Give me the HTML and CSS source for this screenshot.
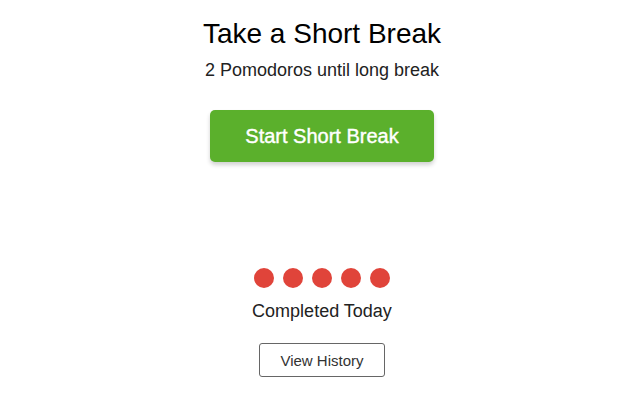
FILE: index.html
```html
<!DOCTYPE html>
<html>
<head>
<meta charset="utf-8">
<link rel="stylesheet" href="styles.css">
</head>
<body>
<main class="page">
  <section class="break">
    <h1 class="title">Take a Short Break</h1>
    <p class="subtitle">2 Pomodoros until long break</p>
    <button class="start">Start Short Break</button>
  </section>
  <section class="today">
    <div class="dots">
      <span class="dot"></span><span class="dot"></span><span class="dot"></span><span class="dot"></span><span class="dot"></span>
    </div>
    <p class="label">Completed Today</p>
    <button class="history">View History</button>
  </section>
</main>
</body>
</html>
```
FILE: styles.css
```css
html, body {
  margin: 0;
  padding: 0;
  background: #fff;
}
body {
  width: 640px;
  height: 400px;
  font-family: "Liberation Sans", Arial, sans-serif;
  color: #111;
}
.page {
  display: flex;
  flex-direction: column;
  align-items: center;
  padding-left: 4px;
}
.break {
  display: flex;
  flex-direction: column;
  align-items: center;
  padding-top: 16px;
}
.title {
  margin: 0;
  font-size: 28px;
  font-weight: normal;
  line-height: 36px;
  color: #000;
}
.subtitle {
  margin: 7px 0 0;
  font-size: 18px;
  line-height: 22px;
  color: #222;
}
.start {
  margin-top: 29px;
  width: 224px;
  height: 52px;
  border: none;
  border-radius: 5px;
  background: #5bb02c;
  color: #fff;
  font-family: "Liberation Sans", Arial, sans-serif;
  font-size: 20px;
  -webkit-text-stroke: 0.4px #fff;
  box-shadow: 0 3px 4px rgba(0,0,0,0.18);
  padding: 0;
}
.today {
  display: flex;
  flex-direction: column;
  align-items: center;
  margin-top: 106px;
}
.dots {
  display: flex;
  gap: 9px;
}
.dot {
  width: 20px;
  height: 20px;
  border-radius: 50%;
  background: #e0443a;
}
.label {
  margin: 12px 0 0;
  font-size: 18px;
  line-height: 22px;
  color: #222;
}
.history {
  margin-top: 21px;
  width: 126px;
  height: 34px;
  border: 1px solid #666;
  border-radius: 3px;
  background: #fff;
  color: #333;
  font-family: "Liberation Sans", Arial, sans-serif;
  font-size: 15px;
  padding: 0;
}
```
